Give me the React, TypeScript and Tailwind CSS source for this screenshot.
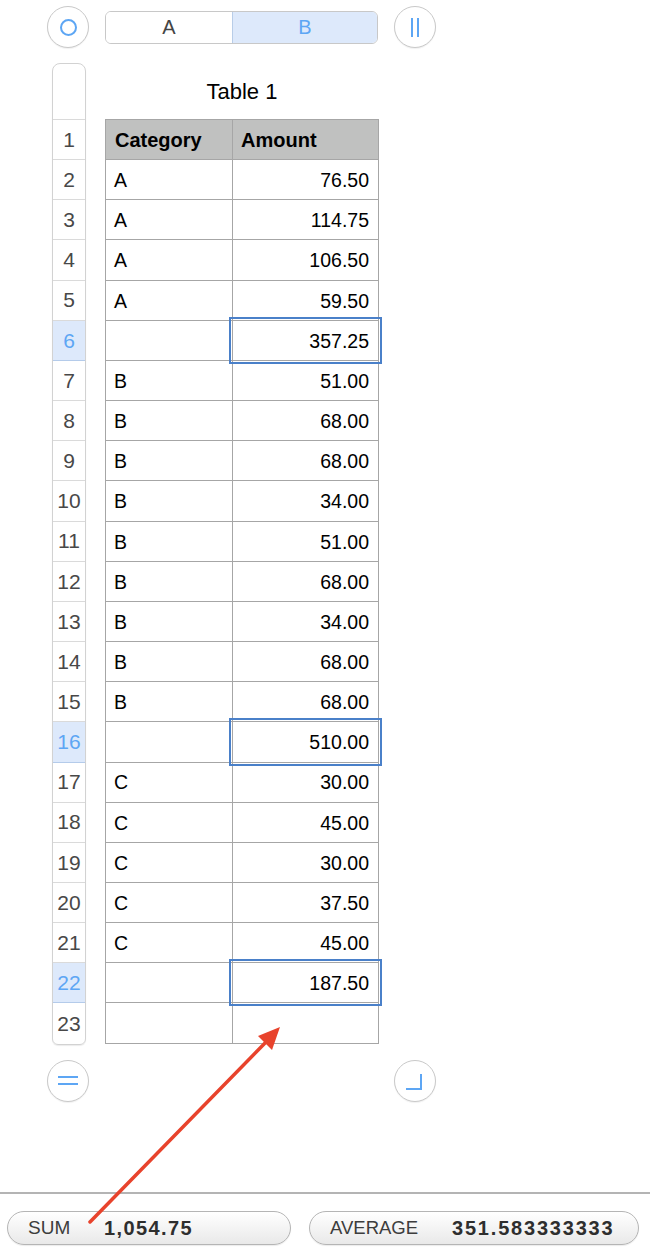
import React from 'react'

const FONT = { fontFamily: '"Liberation Sans", Arial, Helvetica, sans-serif' }

type Row = { cat: string; amt: string; total?: boolean }

const rows: Row[] = [
  { cat: 'A', amt: '76.50' },
  { cat: 'A', amt: '114.75' },
  { cat: 'A', amt: '106.50' },
  { cat: 'A', amt: '59.50' },
  { cat: '', amt: '357.25', total: true },
  { cat: 'B', amt: '51.00' },
  { cat: 'B', amt: '68.00' },
  { cat: 'B', amt: '68.00' },
  { cat: 'B', amt: '34.00' },
  { cat: 'B', amt: '51.00' },
  { cat: 'B', amt: '68.00' },
  { cat: 'B', amt: '34.00' },
  { cat: 'B', amt: '68.00' },
  { cat: 'B', amt: '68.00' },
  { cat: '', amt: '510.00', total: true },
  { cat: 'C', amt: '30.00' },
  { cat: 'C', amt: '45.00' },
  { cat: 'C', amt: '30.00' },
  { cat: 'C', amt: '37.50' },
  { cat: 'C', amt: '45.00' },
  { cat: '', amt: '187.50', total: true },
  { cat: '', amt: '' },
]

function CircleButton({ children }: { children: React.ReactNode }) {
  return (
    <div className="w-[42px] h-[42px] rounded-full border border-[#c9c9c9] bg-white flex items-center justify-center shadow-[0_1px_1px_rgba(0,0,0,0.06)]">
      {children}
    </div>
  )
}

export default function App() {
  // row numbers: header row is 1, data rows start at 2
  const selected = new Set([6, 16, 22])

  return (
    <div className="relative flex flex-col w-[650px] h-[1254px] bg-white overflow-hidden" style={FONT}>
      {/* top controls */}
      <div className="flex items-center pt-[6px] pl-[47px] gap-4">
        <CircleButton>
          <div className="w-[17px] h-[17px] rounded-full border-2 border-[#5da6f4]" />
        </CircleButton>
        <div className="flex w-[273px] h-[33px] rounded-[6px] border border-[#c8c8c8] overflow-hidden text-[20px]">
          <div className="w-[126px] flex items-center justify-center text-[#444] bg-white">A</div>
          <div className="flex-1 flex items-center justify-center text-[#5da6f4] bg-[#dde9fb] border-l border-[#b8cde8]">B</div>
        </div>
        <CircleButton>
          <div className="flex gap-[4px]">
            <div className="w-[2px] h-[19px] bg-[#5da6f4]" />
            <div className="w-[2px] h-[19px] bg-[#5da6f4]" />
          </div>
        </CircleButton>
      </div>

      {/* sheet */}
      <div className="flex mt-[15px] pl-[52px] gap-[19px]">
        {/* row headers */}
        <div className="w-[34px] flex flex-col border border-[#d2d2d2] rounded-t-[8px] rounded-b-[6px] overflow-hidden shadow-[0_1px_1px_rgba(0,0,0,0.08)]">
          <div className="h-[56px] border-b border-[#dadada]" />
          {Array.from({ length: 23 }, (_, i) => i + 1).map((n) => {
            const sel = selected.has(n)
            return (
              <div
                key={n}
                className={
                  sel
                    ? 'h-[40.17px] flex items-center justify-center text-[21px] bg-[#dde9fb] text-[#5da6f4] border-b border-[#b4cbea]'
                    : n === 23
                      ? 'h-[40.17px] flex items-center justify-center text-[21px] text-[#484848]'
                      : 'h-[40.17px] flex items-center justify-center text-[21px] text-[#484848] border-b border-[#dadada]'
                }
              >
                {n}
              </div>
            )
          })}
        </div>

        {/* table */}
        <div className="w-[274px]">
          <div className="h-[56px] flex items-center justify-center text-[22px] text-black">Table 1</div>
          <div className="border-t border-l border-[#a6a6a6]">
            <div className="flex h-[40.17px] bg-[#c0c1c0] border-b border-[#a6a6a6] font-bold text-[20px] text-black">
              <div className="w-[127px] flex items-center pl-[9px] border-r border-[#a6a6a6]">Category</div>
              <div className="w-[146px] flex items-center pl-[8px] border-r border-[#a6a6a6]">Amount</div>
            </div>
            {rows.map((r, i) => (
              <div key={i} className="flex h-[40.17px] border-b border-[#a6a6a6] text-[19.5px] text-black">
                <div className="w-[127px] flex items-center pl-[8px] pt-[2px] border-r border-[#a6a6a6]">{r.cat}</div>
                <div className="relative w-[146px] flex items-center justify-end pr-[9px] pt-[2px] border-r border-[#a6a6a6]">
                  {r.amt}
                  {r.total && (
                    <div className="absolute -left-[4px] -right-[4px] -top-[4px] -bottom-[4px] border-2 border-[#4a80c9] z-10" />
                  )}
                </div>
              </div>
            ))}
          </div>
        </div>
      </div>

      {/* bottom controls */}
      <div className="flex items-center justify-between mt-[15px] pl-[47px] w-[436px]">
        <CircleButton>
          <div className="flex flex-col gap-[5px]">
            <div className="w-[20px] h-[2px] bg-[#5da6f4]" />
            <div className="w-[20px] h-[2px] bg-[#5da6f4]" />
          </div>
        </CircleButton>
        <CircleButton>
          <div className="w-[16px] h-[16px] border-r-2 border-b-2 border-[#5da6f4] mt-[2px] mr-[2px]" />
        </CircleButton>
      </div>

      {/* status bar */}
      <div className="mt-auto border-t-2 border-[#b4b4b4] flex items-center gap-[18px] pl-[7px] pt-[17px] pb-[9px]">
        <div className="w-[284px] h-[34px] rounded-full border border-[#b5b5b5] bg-gradient-to-b from-white to-[#e9e9e9] shadow-[0_1px_1px_rgba(0,0,0,0.08)] flex items-center pl-[20px] text-[19px]">
          <span className="text-[#3d3d3d] w-[76px]">SUM</span>
          <span className="font-bold text-[#2e2e2e] text-[20px] tracking-[1.4px]">1,054.75</span>
        </div>
        <div className="w-[330px] h-[34px] rounded-full border border-[#b5b5b5] bg-gradient-to-b from-white to-[#e9e9e9] shadow-[0_1px_1px_rgba(0,0,0,0.08)] flex items-center pl-[20px] text-[18.5px]">
          <span className="text-[#3d3d3d] w-[122px]">AVERAGE</span>
          <span className="font-bold text-[#2e2e2e] text-[20px] tracking-[1.8px]">351.583333333</span>
        </div>
      </div>

      {/* annotation arrow */}
      <svg className="absolute inset-0 pointer-events-none" width="650" height="1254" viewBox="0 0 650 1254">
        <line x1="90" y1="1222" x2="268" y2="1040" stroke="#e8432c" strokeWidth="3.5" strokeLinecap="round" />
        <polygon points="280,1027 258,1036 272,1050" fill="#e8432c" />
      </svg>
    </div>
  )
}
